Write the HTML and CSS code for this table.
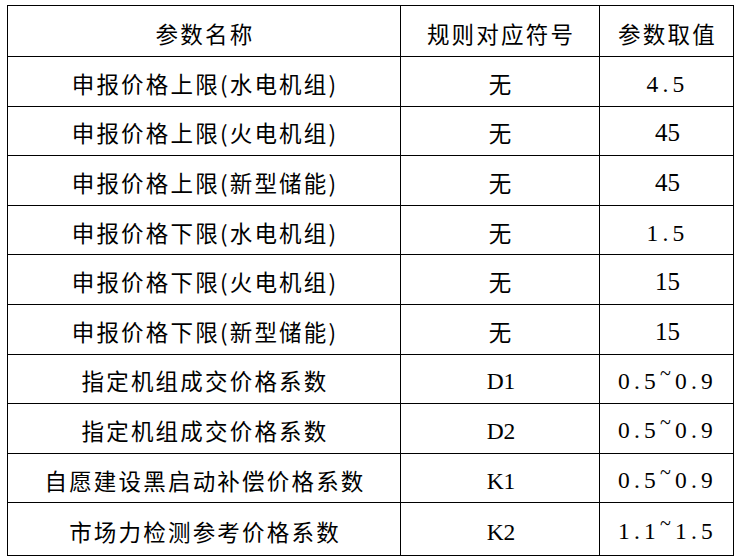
FILE: index.html
```html
<!DOCTYPE html>
<html lang="zh-CN">
<head>
<meta charset="utf-8">
<title>参数表</title>
<link rel="stylesheet" href="styles.css">
</head>
<body>
<table class="params">
  <colgroup>
    <col class="c-name">
    <col class="c-sym">
    <col class="c-val">
  </colgroup>
  <thead>
    <tr class="head-row">
      <th>参数名称</th>
      <th>规则对应符号</th>
      <th>参数取值</th>
    </tr>
  </thead>
  <tbody>
    <tr><td>申报价格上限(水电机组)</td><td>无</td><td><span class="mono">4.5</span></td></tr>
    <tr><td>申报价格上限(火电机组)</td><td>无</td><td><span class="num">45</span></td></tr>
    <tr><td>申报价格上限(新型储能)</td><td>无</td><td><span class="num">45</span></td></tr>
    <tr><td>申报价格下限(水电机组)</td><td>无</td><td><span class="mono">1.5</span></td></tr>
    <tr><td>申报价格下限(火电机组)</td><td>无</td><td><span class="num">15</span></td></tr>
    <tr><td>申报价格下限(新型储能)</td><td>无</td><td><span class="num">15</span></td></tr>
    <tr><td>指定机组成交价格系数</td><td><span class="code">D1</span></td><td><span class="mono">0.5<span class="tilde">~</span>0.9</span></td></tr>
    <tr><td>指定机组成交价格系数</td><td><span class="code">D2</span></td><td><span class="mono">0.5<span class="tilde">~</span>0.9</span></td></tr>
    <tr><td>自愿建设黑启动补偿价格系数</td><td><span class="code">K1</span></td><td><span class="mono">0.5<span class="tilde">~</span>0.9</span></td></tr>
    <tr class="last-row"><td>市场力检测参考价格系数</td><td><span class="code">K2</span></td><td><span class="mono">1.1<span class="tilde">~</span>1.5</span></td></tr>
  </tbody>
</table>
</body>
</html>
```

FILE: styles.css
```css
html, body {
  margin: 0;
  background: #ffffff;
}

body {
  padding: 5px 0 0 7px;
  font-family: "Noto Sans CJK SC", "Noto Sans", sans-serif;
  color: #000000;
}

.params {
  border-collapse: collapse;
  table-layout: fixed;
  width: 726px;
}

.c-name { width: 393px; }
.c-sym { width: 199px; }
.c-val { width: 134px; }

.params th,
.params td {
  border: 1px solid #000000;
  padding: 3px 0 0 2px;
  text-align: center;
  vertical-align: middle;
  font-size: 22.5px;
  font-weight: 400;
  letter-spacing: 2.2px;
  line-height: 26px;
  white-space: nowrap;
}

.params tbody tr {
  height: 49.6px;
}

.params .head-row {
  height: 51px;
}

.params .last-row {
  height: 52.6px;
}

.mono,
.num,
.code {
  font-family: "Liberation Serif", serif;
  font-size: 23.5px;
}

.mono {
  letter-spacing: 4.2px;
}

.num {
  font-size: 25px;
  letter-spacing: 0;
}

.code {
  letter-spacing: 0;
}

.tilde {
  font-size: 20px;
  position: relative;
  top: -0.45em;
}
```
